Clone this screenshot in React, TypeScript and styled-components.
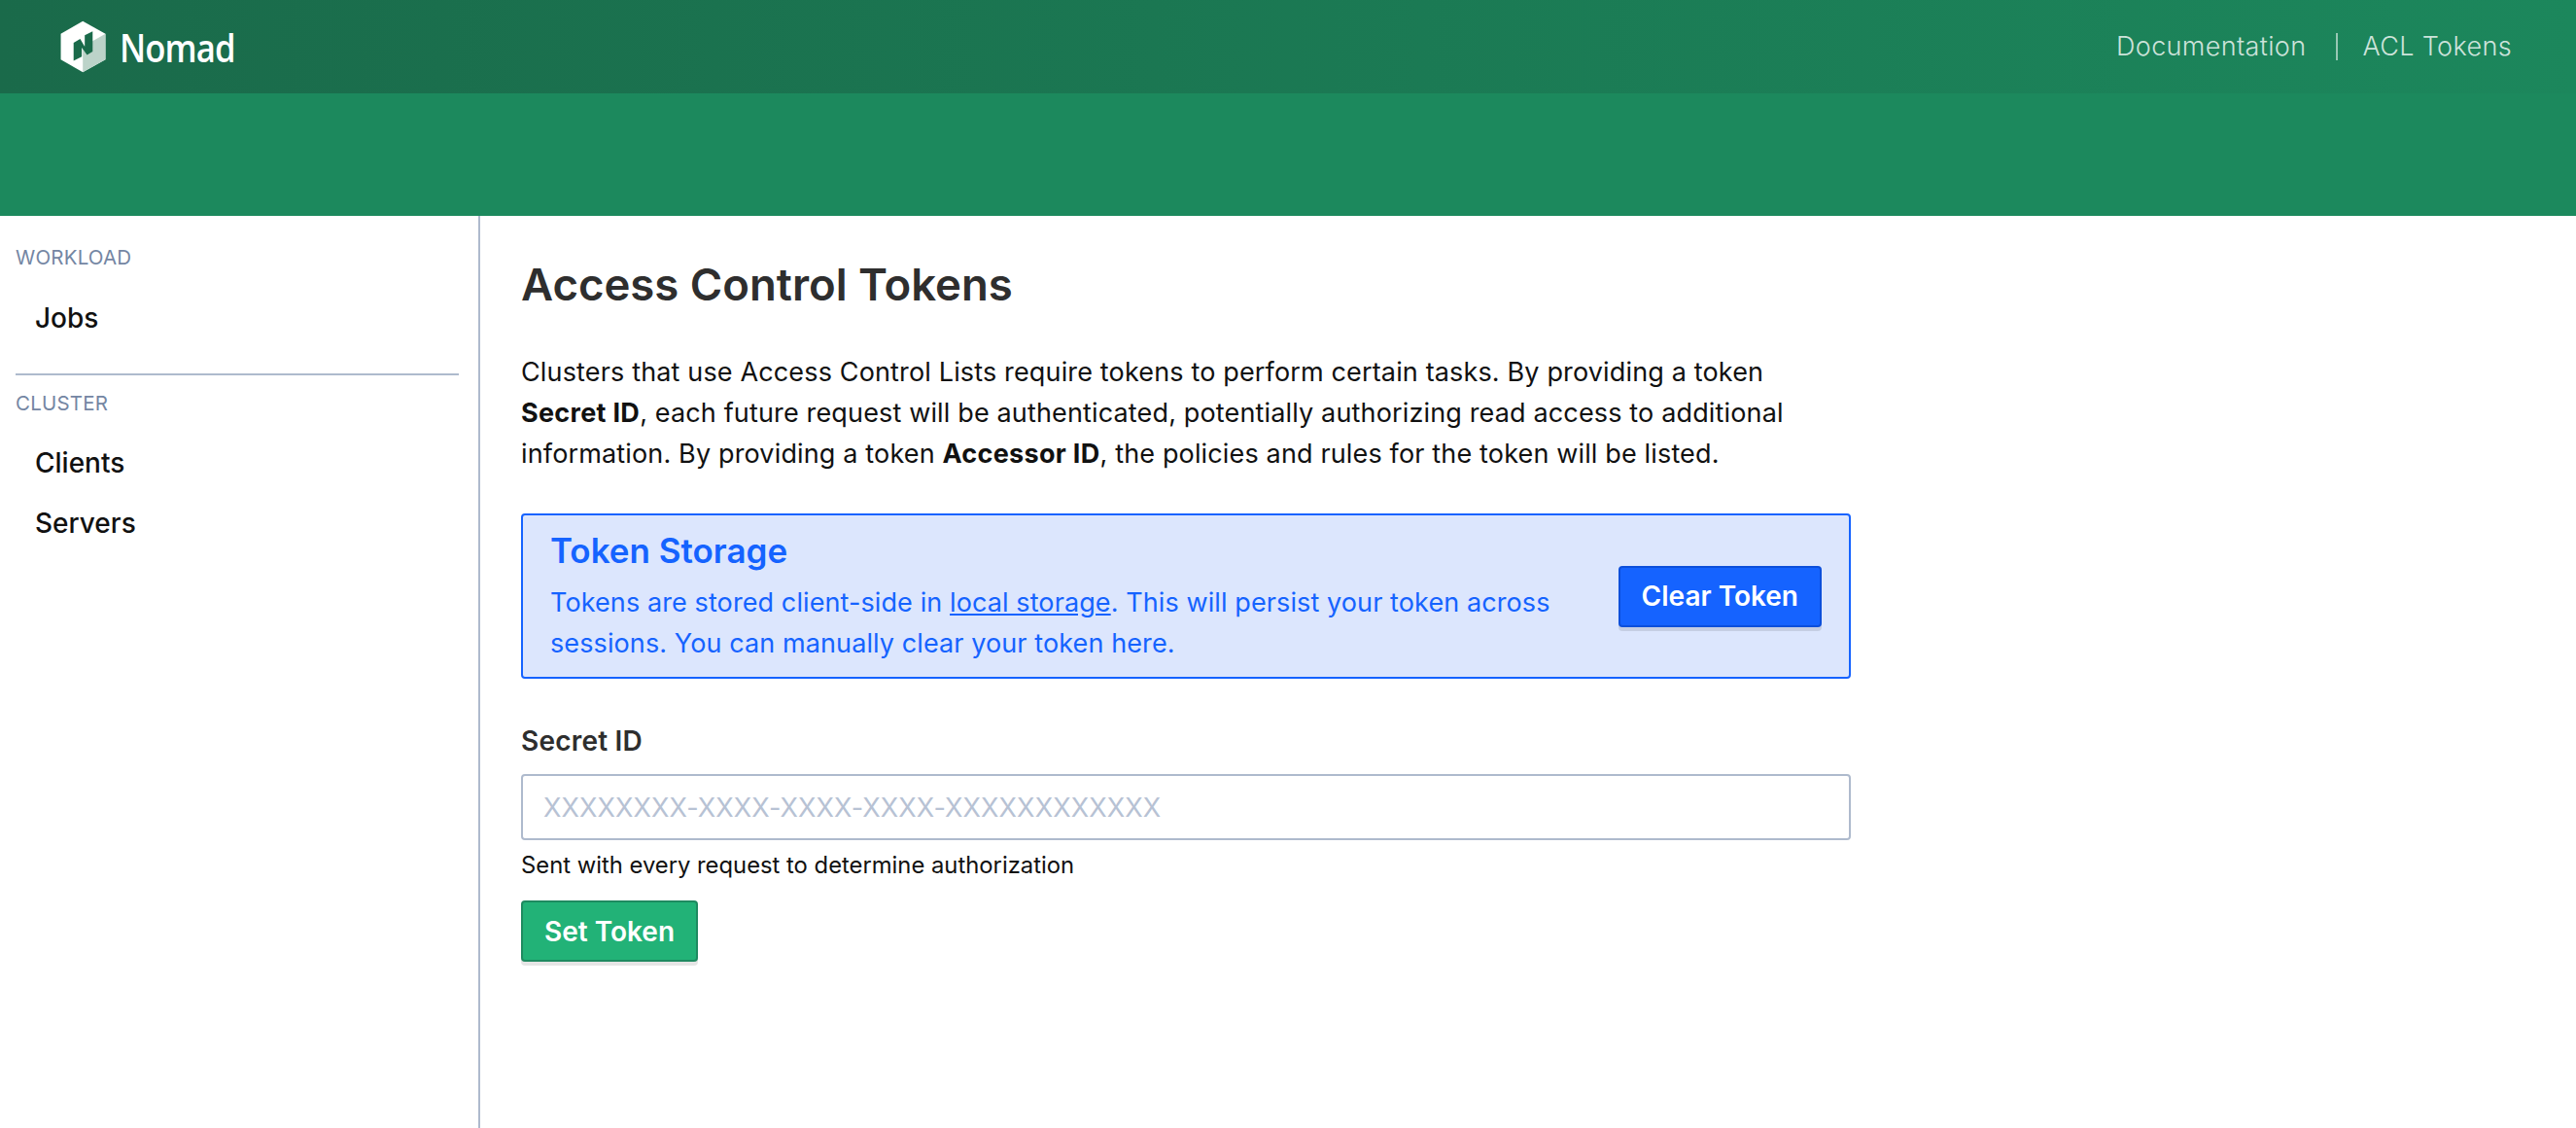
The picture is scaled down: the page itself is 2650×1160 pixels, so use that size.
import React from "react";
import styled, { createGlobalStyle } from "styled-components";

const Global = createGlobalStyle`
  html, body { margin: 0; padding: 0; background: #fff; }
  body { font-family: Inter, "Liberation Sans", sans-serif; color: #111; }
  * { box-sizing: border-box; }
`;

const Page = styled.div`
  width: 2650px;
  height: 1160px;
  display: flex;
  flex-direction: column;
  overflow: hidden;
`;

const TopBar = styled.header`
  height: 96px;
  flex: none;
  display: flex;
  align-items: center;
  justify-content: space-between;
  padding: 0 66px 0 62px;
  background: linear-gradient(90deg, #1a6a4a 0%, #1c875c 100%);
`;

const Brand = styled.div`
  display: flex;
  align-items: center;
  gap: 14px;
`;

const BrandName = styled.span`
  font-family: "Open Sans", sans-serif;
  font-size: 39px;
  font-weight: 600;
  letter-spacing: -1px;
  color: #fff;
  transform: scaleX(0.89);
  transform-origin: left center;
`;

const TopLinks = styled.nav`
  display: flex;
  align-items: center;
`;

const TopLink = styled.a<{ $divided?: boolean }>`
  font-size: 27px;
  font-weight: 300;
  line-height: 28px;
  letter-spacing: 0.35px;
  color: rgba(255, 255, 255, 0.78);
  ${(p) => p.$divided && "margin-left: 31px; padding-left: 25px; border-left: 2px solid rgba(255,255,255,0.55);"}
`;

const SubBar = styled.div`
  height: 126px;
  flex: none;
  background: #1c895d;
`;

const Body = styled.div`
  flex: 1;
  display: flex;
  min-height: 0;
`;

const Sidebar = styled.aside`
  width: 494px;
  flex: none;
  border-right: 2px solid #aebacd;
  padding: 31px 20px 0 16px;
`;

const SectionLabel = styled.div`
  font-size: 20.5px;
  line-height: 24px;
  color: #7486a3;
  letter-spacing: 0.2px;
`;

const NavList = styled.div<{ $top: number }>`
  display: flex;
  flex-direction: column;
  gap: 26px;
  padding: ${(p) => p.$top}px 0 0 20px;
`;

const NavItem = styled.a`
  font-size: 28px;
  font-weight: 550;
  line-height: 36px;
  color: #111;
`;

const SideDivider = styled.hr`
  height: 2px;
  border: 0;
  margin: 39px 0 17px;
  background: #aebacd;
`;

const Main = styled.main`
  flex: 1;
  padding: 45px 0 0 42px;
`;

const Content = styled.div`
  width: 1368px;
`;

const Title = styled.h1`
  margin: 0;
  font-size: 45.5px;
  font-weight: 600;
  line-height: 52px;
  color: #2e2e2e;
`;

const Intro = styled.p`
  margin: 43px 0 0;
  width: 1340px;
  font-size: 27px;
  letter-spacing: 0.15px;
  line-height: 42px;
  color: #111;
  strong { font-weight: 700; letter-spacing: 0.3px; }
`;

const Alert = styled.section`
  margin-top: 40px;
  height: 170px;
  display: flex;
  align-items: center;
  justify-content: space-between;
  padding: 0 28px;
  background: #dce6fd;
  border: 2px solid #1563ff;
  border-radius: 4px;
  color: #1563ff;
`;

const AlertBody = styled.div`
  width: 1060px;
`;

const AlertTitle = styled.h2`
  margin: 0 0 11px;
  font-size: 35px;
  font-weight: 600;
  line-height: 44px;
`;

const AlertText = styled.p`
  margin: 0;
  font-size: 27px;
  letter-spacing: 0.1px;
  line-height: 42px;
  a { color: inherit; text-decoration: underline; }
`;

const Button = styled.button<{ $kind: "primary" | "success" }>`
  font-family: inherit;
  font-size: 28px;
  font-weight: 600;
  color: #fff;
  height: 63px;
  padding: 0 22px;
  border-radius: 4px;
  border: 2px solid ${(p) => (p.$kind === "primary" ? "#0c4fdb" : "#1e8a60")};
  background: ${(p) => (p.$kind === "primary" ? "#1563ff" : "#22b277")};
  box-shadow: 0 4px 0 rgba(0, 0, 0, 0.1);
`;

const Field = styled.div`
  margin-top: 46px;
`;

const FieldLabel = styled.label`
  display: block;
  font-size: 28px;
  font-weight: 600;
  line-height: 36px;
  letter-spacing: 0.2px;
  color: #2e2e2e;
`;

const TextInput = styled.input`
  display: block;
  width: 100%;
  height: 68px;
  margin-top: 16px;
  padding: 0 21px;
  font-family: inherit;
  font-size: 27px;
  letter-spacing: 0.1px;
  border: 2px solid #aebacd;
  border-radius: 4px;
  outline: 0;
  &::placeholder { color: #b7c2d4; opacity: 1; }
`;

const Help = styled.div`
  margin-top: 12px;
  margin-bottom: 22px;
  font-size: 23.8px;
  line-height: 28px;
  color: #111;
`;

const Logo = () => (
  <svg width="47" height="54" viewBox="186 64 136 160" aria-hidden="true">
    <path d="M253 66 322 105 322 183 253 222 186 183 186 105Z" fill="#fff" />
    <path d="M253 144 322 105 322 183 253 222Z" fill="#bcd3c9" />
    <path
      d="M225 132 245 120 259 144 259 109 283 97 283 159 266 169 250 147 250 174 225 187Z"
      fill="#1a6a4a"
    />
  </svg>
);

export default function App() {
  return (
    <Page>
      <Global />
      <TopBar>
        <Brand>
          <Logo />
          <BrandName>Nomad</BrandName>
        </Brand>
        <TopLinks>
          <TopLink>Documentation</TopLink>
          <TopLink $divided>ACL Tokens</TopLink>
        </TopLinks>
      </TopBar>
      <SubBar />
      <Body>
        <Sidebar>
          <SectionLabel>WORKLOAD</SectionLabel>
          <NavList $top={32}>
            <NavItem>Jobs</NavItem>
          </NavList>
          <SideDivider />
          <SectionLabel>CLUSTER</SectionLabel>
          <NavList $top={31}>
            <NavItem>Clients</NavItem>
            <NavItem>Servers</NavItem>
          </NavList>
        </Sidebar>
        <Main>
          <Content>
            <Title>Access Control Tokens</Title>
            <Intro>
              Clusters that use Access Control Lists require tokens to perform certain tasks. By providing a token{" "}
              <strong>Secret ID</strong>, each future request will be authenticated, potentially authorizing read access
              to additional information. By providing a token <strong>Accessor ID</strong>, the policies and rules for
              the token will be listed.
            </Intro>
            <Alert>
              <AlertBody>
                <AlertTitle>Token Storage</AlertTitle>
                <AlertText>
                  Tokens are stored client-side in <a>local storage</a>. This will persist your token across sessions.
                  You can manually clear your token here.
                </AlertText>
              </AlertBody>
              <Button $kind="primary">Clear Token</Button>
            </Alert>
            <Field>
              <FieldLabel>Secret ID</FieldLabel>
              <TextInput placeholder="XXXXXXXX-XXXX-XXXX-XXXX-XXXXXXXXXXXX" />
              <Help>Sent with every request to determine authorization</Help>
              <Button $kind="success">Set Token</Button>
            </Field>
          </Content>
        </Main>
      </Body>
    </Page>
  );
}
